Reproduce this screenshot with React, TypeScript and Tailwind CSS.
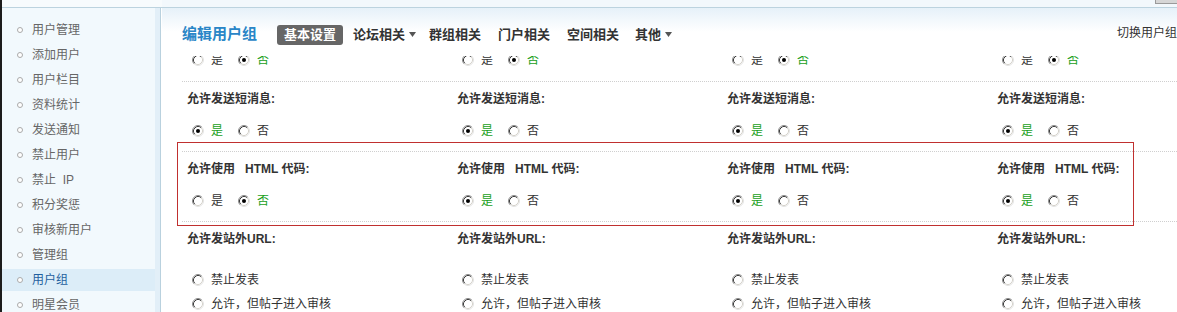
import React from "react";

const FONT = { fontFamily: '"Liberation Sans", "Noto Sans CJK SC", sans-serif' };

const MENU = [
  "用户管理",
  "添加用户",
  "用户栏目",
  "资料统计",
  "发送通知",
  "禁止用户",
  "禁止\u00a0\u00a0IP",
  "积分奖惩",
  "审核新用户",
  "管理组",
  "用户组",
  "明星会员",
];

function Radio({ checked }: { checked?: boolean }) {
  return (
    <svg width="12" height="12" viewBox="0 0 12 12" className="shrink-0">
      <circle cx="6" cy="6" r="5.5" fill="#fff" />
      <path d="M2.11 9.89 A5.5 5.5 0 0 1 9.89 2.11" fill="none" stroke="#8c8c8c" />
      <path d="M9.89 2.11 A5.5 5.5 0 0 1 2.11 9.89" fill="none" stroke="#e4e4e4" />
      <path d="M2.82 9.18 A4.5 4.5 0 0 1 9.18 2.82" fill="none" stroke="#3c3c3c" />
      <path d="M9.18 2.82 A4.5 4.5 0 0 1 2.82 9.18" fill="none" stroke="#d6d3cc" />
      {checked && <circle cx="6" cy="6" r="2" fill="#000" />}
    </svg>
  );
}

function Option({ label, checked }: { label: string; checked?: boolean }) {
  return (
    <span className="flex items-center gap-[7px]">
      <Radio checked={checked} />
      <span className={checked ? "text-[#19a019]" : "text-[#333]"}>{label}</span>
    </span>
  );
}

function YesNo({ yes }: { yes: boolean }) {
  return (
    <div className="flex h-[20px] items-center gap-[15px] pl-[10px] text-[12px]">
      <Option label="是" checked={yes} />
      <Option label="否" checked={!yes} />
    </div>
  );
}

function Caret() {
  return (
    <svg width="7" height="5" viewBox="0 0 7 5" className="ml-[4px]">
      <path d="M0 0 H7 L3.5 5 Z" fill="#555" />
    </svg>
  );
}

function Label({ children }: { children: React.ReactNode }) {
  return (
    <div className="h-[18px] pl-[5px] text-[12px] font-bold leading-[18px] text-[#333] whitespace-nowrap">
      {children}
    </div>
  );
}

export default function App() {
  return (
    <div className="flex h-[312px] w-[1177px] overflow-hidden bg-white" style={FONT}>
      {/* Sidebar */}
      <div className="flex w-[162px] shrink-0 flex-col overflow-hidden border-l-2 border-[#1c1c1c]">
        <div className="h-[8px] shrink-0 border-b border-[#bcd3df] bg-[#f7fbfd]" />
        <div className="flex min-h-0 flex-1">
          <div className="w-[153px] bg-[#f2f9fd] pt-[11px]">
            {MENU.map((m) => {
              const active = m === "用户组";
              return (
                <div
                  key={m}
                  className={`mb-[3px] flex h-[22px] shrink-0 items-center gap-[9px] pl-[15px] text-[12px] ${
                    active ? "bg-[#dcedf8] text-[#1f5f9e]" : "text-[#666]"
                  }`}
                >
                  <span className="h-[6px] w-[6px] rounded-full border border-[#aaa] bg-white" />
                  <span>{m}</span>
                </div>
              );
            })}
          </div>
          <div className="w-[6px] border-r border-[#b9d1de] bg-[#e2eff8]" />
        </div>
      </div>

      {/* Main */}
      <div className="relative flex min-w-0 flex-1 flex-col">
        <div className="relative h-[8px] shrink-0 border-b border-[#bcd3df] bg-[#f2f8fc]">
          <div className="absolute right-0 top-0 h-[4px] w-[22px] border-b border-l border-[#9a9a9a] bg-[#d6d6d6]" />
        </div>
        <div className="flex h-[48px] shrink-0 items-center bg-gradient-to-b from-[#e6f1f9] via-white to-white pl-[20px] pt-[5px]">
          <span className="text-[15px] font-bold text-[#2a86c7]">编辑用户组</span>
          <div className="ml-[20px] flex items-center text-[13px] font-bold text-[#333]">
            <span className="flex h-[20px] items-center rounded-[3px] bg-[#666] px-[7px] text-white">基本设置</span>
            <span className="ml-[10px] flex items-center">
              论坛相关
              <Caret />
            </span>
            <span className="ml-[13px]">群组相关</span>
            <span className="ml-[17px]">门户相关</span>
            <span className="ml-[17px]">空间相关</span>
            <span className="ml-[16px] flex items-center">
              其他
              <Caret />
            </span>
          </div>
          <span className="mb-[3px] ml-auto whitespace-nowrap text-[12px] text-[#333]">切换用户组</span>
        </div>

        <div className="min-h-0 flex-1 overflow-hidden pl-[20px]">
          {/* scrolled: previous row's radios partially under the header */}
          <div className="-mt-[6px] grid grid-cols-[270px_270px_270px_270px] pb-[11px]">
            {[0, 1, 2, 3].map((i) => (
              <YesNo key={i} yes={false} />
            ))}
          </div>

          <div className="grid grid-cols-[270px_270px_270px_270px] border-t border-dotted border-[#cfcfcf] pb-[10px] pt-[8px]">
            {[0, 1, 2, 3].map((i) => (
              <div key={i}>
                <Label>允许发送短消息:</Label>
                <div className="mt-[13px]">
                  <YesNo yes />
                </div>
              </div>
            ))}
          </div>

          <div className="relative grid grid-cols-[270px_270px_270px_270px] border-t border-dotted border-[#cfcfcf] pb-[10px] pt-[8px]">
            {[0, 1, 2, 3].map((i) => (
              <div key={i}>
                <Label>
                  允许使用{"\u00a0\u00a0\u00a0"}HTML 代码:
                </Label>
                <div className="mt-[13px]">
                  <YesNo yes={i !== 0} />
                </div>
              </div>
            ))}
            <div className="pointer-events-none absolute left-[-5px] top-[-10px] h-[84px] w-[957px] border border-[#c0302f]" />
          </div>

          <div className="grid grid-cols-[270px_270px_270px_270px] border-t border-dotted border-[#cfcfcf] pt-[8px]">
            {[0, 1, 2, 3].map((i) => (
              <div key={i}>
                <Label>允许发站外URL:</Label>
                <div className="mt-[22px] flex flex-col gap-[4px] pl-[10px] text-[12px]">
                  <div className="flex h-[20px] items-center">
                    <Option label="禁止发表" />
                  </div>
                  <div className="flex h-[20px] items-center">
                    <Option label="允许，但帖子进入审核" />
                  </div>
                </div>
              </div>
            ))}
          </div>
        </div>
      </div>
    </div>
  );
}
